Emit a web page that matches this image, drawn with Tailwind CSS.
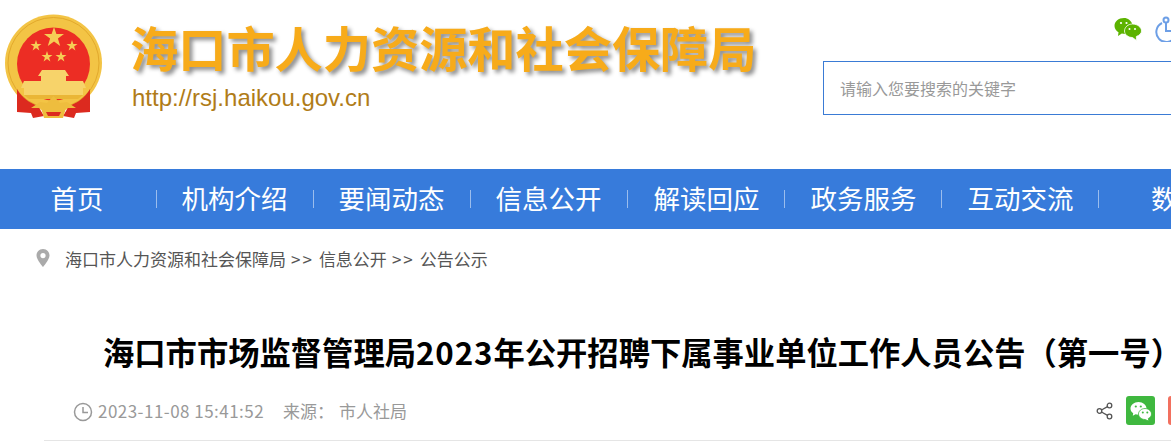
<!DOCTYPE html>
<html lang="zh-CN">
<head>
    <meta charset="UTF-8">
    <title>海口市人力资源和社会保障局</title>
    <script src="https://cdn.jsdelivr.net/npm/@tailwindcss/browser@4"></script>
</head>
<body class="bg-white overflow-hidden h-[444px] font-['Noto_Sans_CJK_SC',sans-serif]">
    <div class="w-[1400px]">
        <!-- header -->
        <header class="h-[169px] flex">
            <svg class="w-[110px] h-[125px] shrink-0 blur-[0.4px]" viewBox="0 0 110 125">
                <!-- ring -->
                <circle cx="53.500" cy="63" r="48.500" fill="#f3c445"/>
                <circle cx="53.500" cy="63" r="45.500" fill="none" stroke="#e2a92c" stroke-width="1"/>
                <circle cx="53.500" cy="64" r="36.500" fill="#ec2d24"/>
                <!-- stars -->
                <polygon points="54,27 56.400,34 64,34 57.900,38.400 60.200,46 54,41.400 47.800,46 50.100,38.400 44,34 51.600,34" fill="#f6cd55"/>
                <polygon points="36,40 37.300,44 41.500,44 38.100,46.500 39.400,50.500 36,48 32.600,50.500 33.900,46.500 30.500,44 34.700,44" fill="#f6cd55"/>
                <polygon points="72,40 73.300,44 77.500,44 74.100,46.500 75.400,50.500 72,48 68.600,50.500 69.900,46.500 66.500,44 70.700,44" fill="#f6cd55"/>
                <polygon points="47,51 48.300,55 52.500,55 49.100,57.500 50.400,61.500 47,59 43.600,61.500 44.900,57.500 41.500,55 45.700,55" fill="#f6cd55"/>
                <polygon points="61,51 62.300,55 66.500,55 63.100,57.500 64.400,61.500 61,59 57.600,61.500 58.900,57.500 55.500,55 59.700,55" fill="#f6cd55"/>
                <!-- gate -->
                <path d="M42 70 L65 70 L69 76 L66 76 L66 81 L83 81 L86 88 L83 88 L83 95 L24 95 L24 88 L21 88 L24 81 L41 81 L41 76 L38 76Z" fill="#f7d36a"/>
                <path d="M24 95 L83 95 L78 99 L29 99Z" fill="#eab636"/>
                <!-- ribbon -->
                <path d="M17 89 C22 98 30 103 38 106 L44 116 L33 118 L31 113 L17 112Z" fill="#dc2a1f"/>
                <path d="M90 89 C85 98 77 103 69 106 L63 116 L74 118 L76 113 L90 112Z" fill="#dc2a1f"/>
                <!-- lower ornament -->
                <path d="M31 108 L40 102 L47 103 L53.500 96 L60 103 L67 102 L76 108 L66 108 L63 118 L44 118 L41 108Z" fill="#eebd3e"/>
                <path d="M46 112 L61 112 L59 116 L48 116Z" fill="#dc2a1f"/>
            </svg>
            <div class="ml-[20px] mt-[16px] w-[660px] shrink-0">
                <h1 class="text-[48.2px] leading-[60px] font-bold text-[#f7ab1a] [text-shadow:3px_3px_4px_rgba(0,0,0,0.45)]">海口市人力资源和社会保障局</h1>
                <p class="mt-[4px] ml-[2px] text-[24px] leading-[36px] text-[#b07c18] font-['Liberation_Sans',sans-serif]">http://rsj.haikou.gov.cn</p>
            </div>
            <div class="ml-[33px] flex-1">
                <div class="flex items-center h-[61px] pl-[291px] gap-[12px] pb-[4px]">
                    <svg class="w-[28px] h-[24px]" viewBox="0 0 28 24">
                        <path d="M10 1 C4.500 1 0.500 4.500 0.500 9 C0.500 12 2.500 14 4.500 15.200 L4 19 L7.800 16.500 C9 16.800 11 17 12 16.800 L18.500 7.500 C17 3.500 14 1 10 1Z" fill="#5cb300"/>
                        <path d="M18.500 7 C14 7 10.500 10.300 10.500 14 C10.500 17.500 14 20.500 18.500 20.500 L22.500 23.500 L22.300 19.500 C25.500 18.300 27.500 16.300 27.500 14 C27.500 10.300 23.500 7 18.500 7Z" fill="#5cb300" stroke="#fff" stroke-width="0.800"/>
                        <circle cx="7" cy="6" r="1.100" fill="#fff"/><circle cx="12.500" cy="6" r="1.100" fill="#fff"/>
                        <circle cx="15.500" cy="12" r="1" fill="#fff"/><circle cx="21" cy="12" r="1" fill="#fff"/>
                    </svg>
                    <svg class="w-[26px] h-[26px]" viewBox="0 0 26 26" fill="none" stroke="#6d9fe6" stroke-width="2">
                        <path d="M8 7 A10 10 0 1 0 21 21"/>
                        <circle cx="12" cy="4" r="2.500"/>
                        <path d="M12 7 V15 H24"/>
                    </svg>
                </div>
                <div class="h-[54px] w-[500px] border border-[#3a7bd5] flex items-center pl-[16px] text-[16px] text-[#999]">请输入您要搜索的关键字</div>
            </div>
        </header>

        <!-- nav -->
        <nav class="h-[60px] bg-[#377bdb] flex text-[26.5px] text-white">
            <a class="w-[157px] h-full flex items-center justify-center relative pb-[2px] pr-[3px]">首页<i class="absolute right-0 top-[21px] h-[18px] w-px bg-white/50"></i></a>
            <a class="w-[157px] h-full flex items-center justify-center relative pb-[2px] pr-[2px]">机构介绍<i class="absolute right-0 top-[21px] h-[18px] w-px bg-white/50"></i></a>
            <a class="w-[157px] h-full flex items-center justify-center relative pb-[2px] pr-[2px]">要闻动态<i class="absolute right-0 top-[21px] h-[18px] w-px bg-white/50"></i></a>
            <a class="w-[157px] h-full flex items-center justify-center relative pb-[2px] pr-[2px]">信息公开<i class="absolute right-0 top-[21px] h-[18px] w-px bg-white/50"></i></a>
            <a class="w-[157px] h-full flex items-center justify-center relative pb-[2px]">解读回应<i class="absolute right-0 top-[21px] h-[18px] w-px bg-white/50"></i></a>
            <a class="w-[157px] h-full flex items-center justify-center relative pb-[2px]">政务服务<i class="absolute right-0 top-[21px] h-[18px] w-px bg-white/50"></i></a>
            <a class="w-[157px] h-full flex items-center justify-center relative pb-[2px]">互动交流<i class="absolute right-0 top-[21px] h-[18px] w-px bg-white/50"></i></a>
            <a class="ml-[52px] h-full flex items-center relative pb-[2px]">数</a>
        </nav>

        <!-- breadcrumb -->
        <div class="h-[62px] flex items-center pl-[36px] pb-[2px] text-[17px] text-[#555]">
            <svg class="w-[14px] h-[18px] mb-[3px]" viewBox="0 0 14 18"><path fill-rule="evenodd" d="M7 0 C3 0 0.500 3 0.500 6.500 C0.500 10.500 7 18 7 18 C7 18 13.500 10.500 13.500 6.500 C13.500 3 11 0 7 0Z M7 4 A2.600 2.600 0 1 1 7 9.200 A2.600 2.600 0 1 1 7 4Z" fill="#aaa"/></svg>
            <span class="ml-[15px]">海口市人力资源和社会保障局</span>
            <span class="ml-[5px] tracking-[2px]">&gt;&gt;</span>
            <span class="ml-[5px]">信息公开</span>
            <span class="ml-[5px] tracking-[2px]">&gt;&gt;</span>
            <span class="ml-[5px]">公告公示</span>
        </div>

        <!-- article head -->
        <h2 class="mt-[33px] ml-[103px] text-[31.3px] leading-[56px] font-bold text-black whitespace-nowrap">海口市市场监督管理局<span class="tracking-[0.9px]">2023</span>年公开招聘下属事业单位工作人员公告（第一号）</h2>
        <div class="w-[1127px] ml-[44px] h-[61px] pt-[16px] border-b border-[#e5e5e5]">
            <div class="h-[29px] flex items-center text-[17px] text-[#999]">
                <svg class="ml-[29px] w-[20px] h-[20px] mt-[2px]" viewBox="0 0 20 20" fill="none" stroke="#999" stroke-width="1.500"><circle cx="10" cy="10" r="8.500"/><path d="M10 5 V10.500 H15"/></svg>
                <span class="ml-[5px] tracking-[0.47px]">2023-11-08 15:41:52</span>
                <span class="ml-[19px]">来源：</span>
                <span class="ml-[5px]">市人社局</span>
                <div class="ml-auto flex items-center">
                    <svg class="w-[18px] h-[18px]" viewBox="0 0 18 18" fill="none" stroke="#555" stroke-width="1.300"><circle cx="13.500" cy="3.500" r="2.300"/><circle cx="3.500" cy="9" r="2.300"/><circle cx="13.500" cy="14.500" r="2.300"/><path d="M5.500 8 L11.500 4.600 M5.500 10 L11.500 13.400"/></svg>
                    <div class="ml-[12px] w-[29px] h-[29px] rounded-[3px] bg-[#3fb83f] flex items-center justify-center">
                        <svg class="w-[24px] h-[22px]" viewBox="0 0 24 22" fill="#fff">
                            <path d="M9.500 2 C5 2 1.500 5 1.500 8.500 C1.500 10.500 2.500 12.200 4.200 13.300 L3.800 15.800 L6.500 14.300 C7.500 14.600 8.500 14.700 9.500 14.700 C14 14.700 17.500 12 17.500 8.500 C17.500 5 14 2 9.500 2Z"/>
                            <path d="M16 8.500 C12.500 8.500 9.500 11 9.500 14 C9.500 17 12.500 19.500 16 19.500 L19.800 21 L19.300 18.500 C21.300 17.500 22.500 15.800 22.500 14 C22.500 11 19.500 8.500 16 8.500Z" stroke="#3fb83f" stroke-width="0.800"/>
                            <circle cx="6.800" cy="6.500" r="1.100" fill="#3fb83f"/><circle cx="11.800" cy="6.500" r="1.100" fill="#3fb83f"/>
                            <circle cx="13.800" cy="12.500" r="1" fill="#3fb83f"/><circle cx="18.300" cy="12.500" r="1" fill="#3fb83f"/>
                        </svg>
                    </div>
                    <div class="ml-[13px] w-[29px] h-[29px] rounded-[3px] bg-[#f2705f] mr-[-26px]"></div>
                </div>
            </div>
        </div>
    </div>
</body>
</html>
